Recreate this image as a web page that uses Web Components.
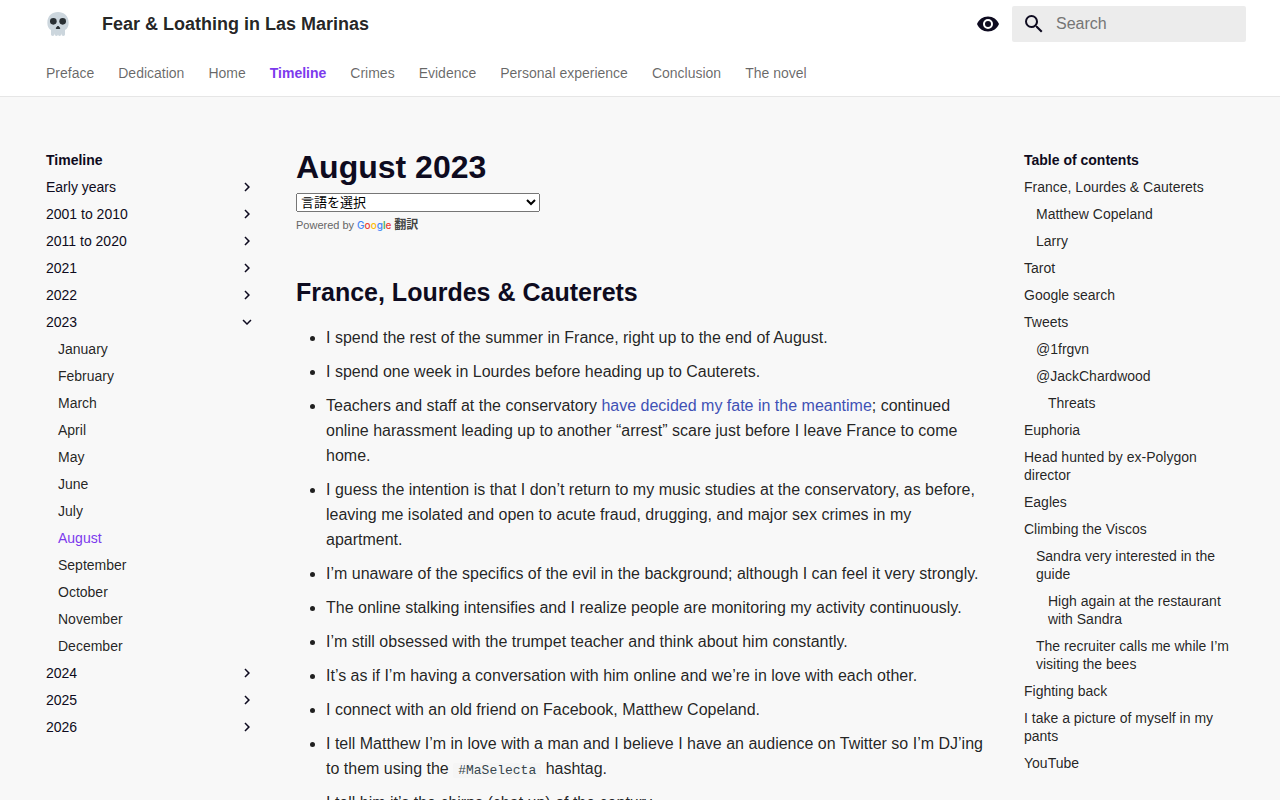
<!DOCTYPE html>
<html lang="en">
<head>
<meta charset="utf-8">
<meta name="viewport" content="width=device-width, initial-scale=1">
<title>August 2023 - Fear &amp; Loathing in Las Marinas</title>
<style>
:root {
  --fg: rgba(0, 0, 0, .87);
  --fg-light: rgba(0, 0, 0, .6);
  --heading: #0e0b20;
  --accent: #7c3aed;
  --link: #4051b5;
  --bg: #f8f8f8;
}
body {
  margin: 0;
  background: var(--bg);
  color: var(--fg);
  font-family: "Liberation Sans", "Noto Sans CJK JP", sans-serif;
}
</style>
</head>
<body>
<site-page></site-page>

<template id="page-template">
  <style>
    :host { display: block; }
    .grid { display: grid; grid-template-columns: 242px minmax(0, 1fr) 242px; max-width: 1220px; margin: 0 auto; padding-top: 30px; }
    side-nav, page-toc { position: sticky; top: 97px; align-self: start; }
  </style>
  <site-header></site-header>
  <div class="grid">
    <side-nav></side-nav>
    <doc-article></doc-article>
    <page-toc></page-toc>
  </div>
</template>

<template id="header-template">
  <style>
    :host { display: block; position: sticky; top: 0; z-index: 2; background: #fff; border-bottom: 1px solid #e6e6e6; }
    .bar, nav { box-sizing: border-box; max-width: 1220px; height: 48px; margin: 0 auto; display: flex; align-items: center; }
    .bar { padding: 0 4px 0 16px; }
    .logo { display: flex; }
    .title { flex: 1; margin-left: 32px; font-size: 18px; font-weight: 700; line-height: 48px; }
    .icon { display: flex; padding: 0; margin-right: 12px; border: 0; background: none; color: var(--heading); cursor: pointer; }
    form { box-sizing: border-box; display: flex; align-items: center; width: 234px; height: 36px; padding: 0 10px; border-radius: 2px; background: #ececec; color: var(--heading); }
    form svg { flex: none; }
    input { flex: 1; min-width: 0; margin: 0 0 0 10px; padding: 0; border: 0; outline: 0; background: none; font: 16px "Liberation Sans", sans-serif; color: var(--fg); }
    input::placeholder { color: #757575; opacity: 1; }
    nav { padding: 2px 16px 0; gap: 24px; }
    nav a { font-size: 14px; line-height: 18px; color: var(--fg-light); text-decoration: none; white-space: nowrap; }
    nav a[aria-current] { color: var(--accent); font-weight: 700; }
  </style>
  <header>
    <div class="bar">
      <a class="logo" href="#" aria-label="Home">
        <svg width="24" height="24" viewBox="0 0 36 36" aria-hidden="true">
          <path fill="#CCD6DD" d="M34 16C34 6 26.800 0 18 0S2 6 2 16c0 5.500 2 9 5.500 11v6.500c0 1.500 1.100 2.500 2.600 2.500s2.600-1 2.600-2.500v-.9h.5v.9c0 1.500 1 2.500 2.400 2.500 1.500 0 2.400-1 2.400-2.500 0 1.500.9 2.500 2.400 2.500 1.400 0 2.400-1 2.400-2.500v-.9h.5v.9c0 1.500 1.100 2.500 2.600 2.500s2.600-1 2.600-2.500V27C32 25 34 21.500 34 16z"/>
          <circle cx="11" cy="14" r="5" fill="#292F33"/><circle cx="25" cy="14" r="5" fill="#292F33"/>
          <path fill="#292F33" d="M15.500 25.500c-.8 0-1-.8-.6-1.700l1.700-2.200c.8-.9 2-.9 2.800 0l1.700 2.200c.4.900.2 1.700-.6 1.700z"/>
        </svg>
      </a>
      <div class="title">Fear &amp; Loathing in Las Marinas</div>
      <button class="icon" type="button" aria-label="Switch palette">
        <svg width="24" height="24" viewBox="0 0 24 24" fill="currentColor" aria-hidden="true"><path d="M12 9a3 3 0 0 0-3 3 3 3 0 0 0 3 3 3 3 0 0 0 3-3 3 3 0 0 0-3-3m0 8a5 5 0 0 1-5-5 5 5 0 0 1 5-5 5 5 0 0 1 5 5 5 5 0 0 1-5 5m0-12.500C7 4.500 2.730 7.610 1 12c1.730 4.390 6 7.500 11 7.500s9.270-3.110 11-7.500c-1.730-4.390-6-7.500-11-7.500"/></svg>
      </button>
      <form role="search">
        <svg width="24" height="24" viewBox="0 0 24 24" fill="currentColor" aria-hidden="true"><path d="M9.500 3A6.500 6.500 0 0 1 16 9.500c0 1.610-.59 3.090-1.560 4.230l.27.270h.79l5 5-1.500 1.500-5-5v-.79l-.27-.27A6.520 6.520 0 0 1 9.500 16 6.500 6.500 0 0 1 3 9.500 6.500 6.500 0 0 1 9.500 3m0 2C7 5 5 7 5 9.500S7 14 9.500 14 14 12 14 9.500 12 5 9.500 5"/></svg>
        <input type="text" aria-label="Search" placeholder="Search">
      </form>
    </div>
    <nav aria-label="Tabs">
      <a href="#">Preface</a><a href="#">Dedication</a><a href="#">Home</a><a href="#" aria-current="page">Timeline</a><a href="#">Crimes</a><a href="#">Evidence</a><a href="#">Personal experience</a><a href="#">Conclusion</a><a href="#">The novel</a>
    </nav>
  </header>
</template>

<template id="item-template">
  <style>
    :host { display: block; margin-top: 9px; font-size: 14px; line-height: 18px; }
    a { display: flex; justify-content: space-between; color: var(--fg); text-decoration: none; }
    :host([section]) a { color: var(--heading); }
    :host([active]) a { color: var(--accent); }
    :host([level="2"]) { padding-left: 12px; }
    :host([level="3"]) { padding-left: 24px; }
    svg { display: none; flex: none; color: var(--heading); }
    :host([section]) svg { display: block; }
    :host([open]) svg { transform: rotate(90deg); }
  </style>
  <a href="#"><slot></slot><svg width="18" height="18" viewBox="0 0 24 24" fill="currentColor" aria-hidden="true"><path d="M8.590 16.580 13.170 12 8.590 7.410 10 6l6 6-6 6z"/></svg></a>
</template>

<template id="nav-template">
  <style>
    :host { display: block; }
    nav { padding: 24px 16px; }
    h2 { margin: 0; font-size: 14px; line-height: 18px; color: var(--heading); }
  </style>
  <nav aria-labelledby="t">
    <h2 id="t">Timeline</h2>
    <nav-item section>Early years</nav-item>
    <nav-item section>2001 to 2010</nav-item>
    <nav-item section>2011 to 2020</nav-item>
    <nav-item section>2021</nav-item>
    <nav-item section>2022</nav-item>
    <nav-item section open>2023</nav-item>
    <nav-item level="2">January</nav-item>
    <nav-item level="2">February</nav-item>
    <nav-item level="2">March</nav-item>
    <nav-item level="2">April</nav-item>
    <nav-item level="2">May</nav-item>
    <nav-item level="2">June</nav-item>
    <nav-item level="2">July</nav-item>
    <nav-item level="2" active>August</nav-item>
    <nav-item level="2">September</nav-item>
    <nav-item level="2">October</nav-item>
    <nav-item level="2">November</nav-item>
    <nav-item level="2">December</nav-item>
    <nav-item section>2024</nav-item>
    <nav-item section>2025</nav-item>
    <nav-item section>2026</nav-item>
  </nav>
</template>

<template id="toc-template">
  <style>
    :host { display: block; }
    nav { padding: 24px 16px; }
    h2 { margin: 0; font-size: 14px; line-height: 18px; color: var(--heading); }
  </style>
  <nav aria-labelledby="t">
    <h2 id="t">Table of contents</h2>
    <nav-item>France, Lourdes &amp; Cauterets</nav-item>
    <nav-item level="2">Matthew Copeland</nav-item>
    <nav-item level="2">Larry</nav-item>
    <nav-item>Tarot</nav-item>
    <nav-item>Google search</nav-item>
    <nav-item>Tweets</nav-item>
    <nav-item level="2">@1frgvn</nav-item>
    <nav-item level="2">@JackChardwood</nav-item>
    <nav-item level="3">Threats</nav-item>
    <nav-item>Euphoria</nav-item>
    <nav-item>Head hunted by ex-Polygon director</nav-item>
    <nav-item>Eagles</nav-item>
    <nav-item>Climbing the Viscos</nav-item>
    <nav-item level="2">Sandra very interested in the guide</nav-item>
    <nav-item level="3">High again at the restaurant with Sandra</nav-item>
    <nav-item level="2">The recruiter calls me while I’m visiting the bees</nav-item>
    <nav-item>Fighting back</nav-item>
    <nav-item>I take a picture of myself in my pants</nav-item>
    <nav-item>YouTube</nav-item>
  </nav>
</template>

<template id="translate-template">
  <style>
    :host { display: block; color: #666; font-size: 11px; line-height: 18px; }
    select { display: block; width: 244px; height: 19px; margin: 0 0 4px; font: 13px "Liberation Sans", "Noto Sans CJK JP", sans-serif; }
    .credit { display: flex; align-items: center; }
    a { display: flex; align-items: center; margin-left: 3px; color: #444; font-size: 12px; font-weight: 700; text-decoration: none; }
    .brand { margin-right: 3px; font: 500 10px/12px Inter, sans-serif; }
    .b { color: #4285f4; } .r { color: #ea4335; } .y { color: #fbbc05; } .g { color: #34a853; }
  </style>
  <select aria-label="言語翻訳ウィジェット"><option>言語を選択</option></select>
  <div class="credit">Powered by <a href="#"><span class="brand"><span class="b">G</span><span class="r">o</span><span class="y">o</span><span class="b">g</span><span class="g">l</span><span class="r">e</span></span><span>翻訳</span></a></div>
</template>

<template id="article-template">
  <style>
    :host { display: block; padding: 20px 24px 24px; font-size: 16px; line-height: 25px; }
    h1, h2 { margin: 0; color: var(--heading); }
    h1 { font-size: 32px; line-height: 40px; margin-bottom: 6px; }
    h2 { font-size: 25px; line-height: 36px; margin: 40px 0 15px; }
    ul { margin: 0; padding: 0 0 0 30px; list-style: disc; }
    li + li { margin-top: 9px; }
    a { color: var(--link); text-decoration: none; }
    code { padding: 0 5px; border-radius: 2px; background: #f5f5f5; color: #36464e; font: 13px "Liberation Mono", monospace; }
  </style>
  <article>
    <h1>August 2023</h1>
    <translate-widget></translate-widget>
    <h2>France, Lourdes &amp; Cauterets</h2>
    <ul>
      <li>I spend the rest of the summer in France, right up to the end of August.</li>
      <li>I spend one week in Lourdes before heading up to Cauterets.</li>
      <li>Teachers and staff at the conservatory <a href="#">have decided my fate in the meantime</a>; continued online harassment leading up to another “arrest” scare just before I leave France to come home.</li>
      <li>I guess the intention is that I don’t return to my music studies at the conservatory, as before, leaving me isolated and open to acute fraud, drugging, and major sex crimes in my apartment.</li>
      <li>I’m unaware of the specifics of the evil in the background; although I can feel it very strongly.</li>
      <li>The online stalking intensifies and I realize people are monitoring my activity continuously.</li>
      <li>I’m still obsessed with the trumpet teacher and think about him constantly.</li>
      <li>It’s as if I’m having a conversation with him online and we’re in love with each other.</li>
      <li>I connect with an old friend on Facebook, Matthew Copeland.</li>
      <li>I tell Matthew I’m in love with a man and I believe I have an audience on Twitter so I’m DJ’ing to them using the <code>#MaSelecta</code> hashtag.</li>
      <li>I tell him it’s the chirps (chat up) of the century.</li>
    </ul>
  </article>
</template>

<script>
const define = (name, templateId) => customElements.define(name, class extends HTMLElement {
  constructor() {
    super();
    this.attachShadow({ mode: 'open' }).append(document.getElementById(templateId).content.cloneNode(true));
  }
});
define('nav-item', 'item-template');
define('translate-widget', 'translate-template');
define('site-header', 'header-template');
define('side-nav', 'nav-template');
define('page-toc', 'toc-template');
define('doc-article', 'article-template');
define('site-page', 'page-template');
</script>
</body>
</html>
